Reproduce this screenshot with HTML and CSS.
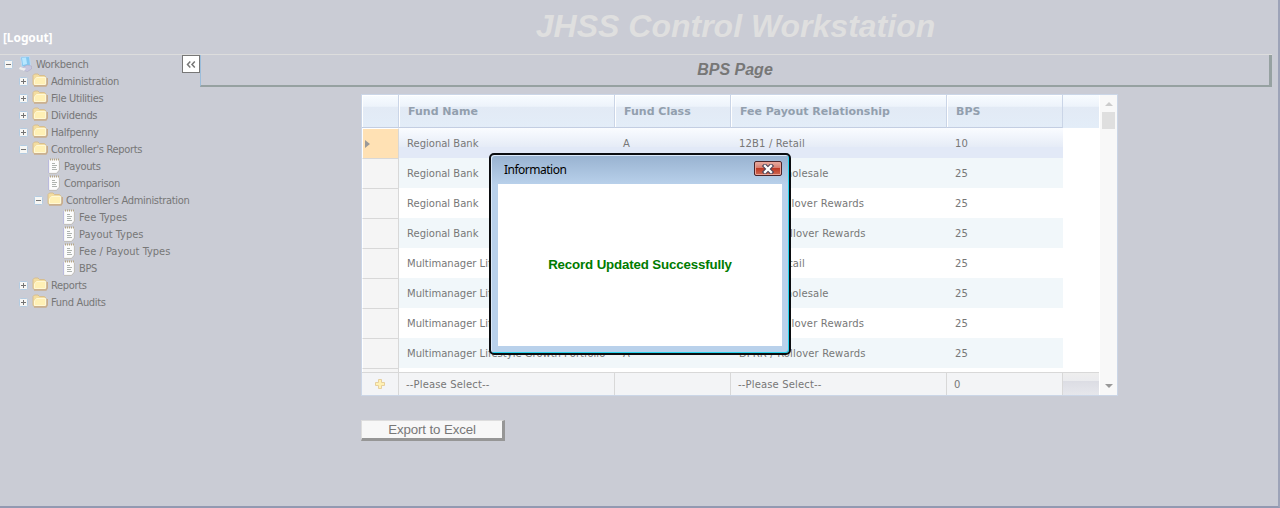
FILE: index.html
```html
<!DOCTYPE html>
<html lang="en"><head><meta charset="utf-8"><title>JHSS Control Workstation</title><link rel="stylesheet" href="styles.css"></head>
<body>
<svg width="0" height="0" class="defs">
<symbol id="folder" viewBox="0 0 16 14"><path d="M1 11.500V2.500L2.500 1H6L7.500 2.500H12.500L14 4.500V11L13 12.500H2.500Z" fill="#f3dda0" stroke="#d6bd90"/><path d="M2.500 11.500V7L4.500 4.500H13.500V11.500Z" fill="#fff0b5" stroke="#fff8d5"/><path d="M2 13H14L15.300 11V5" fill="none" stroke="#c9ad8c" stroke-width="1.400"/></symbol>
<symbol id="note" viewBox="0 0 12 16"><path d="M1.500 2H10.500V12.500L8.500 14.500H1.500Z" fill="#fcfcfc" stroke="#f4f4f4"/><path d="M.5 2V15" stroke="#babade"/><path d="M1 15.500H8.500L11.500 12V3" fill="none" stroke="#c2bfbb"/><path d="M2 1.500H11" stroke="#b6a685" stroke-width="2" stroke-dasharray="1 1"/><path d="M4 5.500H7M4 7.500H9M4 9.500H8M4 11.500H9" stroke="#aeb3af"/></symbol>
<symbol id="computer" viewBox="0 0 13 16"><path d="M1.500 1L10.500 .5L11.500 9.500L3 11Z" fill="#83c7f0" stroke="#c2d7ee"/><path d="M3 2L7 1.500L8 8L4 9Z" fill="#b8e7ff"/><path d="M8 9L12.500 10V13L8.500 15.500L3 14V12Z" fill="#c6c6df" stroke="#adadc8" stroke-width=".6"/><path d="M1 11L7 12.500L5 15L0 13Z" fill="#eee"/></symbol>
<symbol id="plus" viewBox="0 0 9 9"><rect x=".5" y=".5" width="8" height="8" rx="1" fill="#f6f6f4" stroke="#b3cbe1"/><path d="M2 4.500H7M4.500 2V7" stroke="#747474"/></symbol>
<symbol id="minus" viewBox="0 0 9 9"><rect x=".5" y=".5" width="8" height="8" rx="1" fill="#f6f6f4" stroke="#b3cbe1"/><path d="M2 4.500H7" stroke="#747474"/></symbol>
</svg>
<div class="page">
<header class="top"><a class="logout">[Logout]</a><h1>JHSS Control Workstation</h1></header>
<div class="main">
<nav class="side"><ul class="tree">
<li class="l0"><svg class="exp"><use href="#minus"/></svg><svg class="pc"><use href="#computer"/></svg><span>Workbench</span></li>
<li class="l1"><svg class="exp"><use href="#plus"/></svg><svg class="folder"><use href="#folder"/></svg><span>Administration</span></li>
<li class="l1"><svg class="exp"><use href="#plus"/></svg><svg class="folder"><use href="#folder"/></svg><span>File Utilities</span></li>
<li class="l1"><svg class="exp"><use href="#plus"/></svg><svg class="folder"><use href="#folder"/></svg><span>Dividends</span></li>
<li class="l1"><svg class="exp"><use href="#plus"/></svg><svg class="folder"><use href="#folder"/></svg><span>Halfpenny</span></li>
<li class="l1"><svg class="exp"><use href="#minus"/></svg><svg class="folder"><use href="#folder"/></svg><span>Controller's Reports</span></li>
<li class="l2 leaf"><svg class="note"><use href="#note"/></svg><span>Payouts</span></li>
<li class="l2 leaf"><svg class="note"><use href="#note"/></svg><span>Comparison</span></li>
<li class="l2"><svg class="exp"><use href="#minus"/></svg><svg class="folder"><use href="#folder"/></svg><span>Controller's Administration</span></li>
<li class="l3 leaf"><svg class="note"><use href="#note"/></svg><span class="wide">Fee Types</span></li>
<li class="l3 leaf"><svg class="note"><use href="#note"/></svg><span class="wide">Payout Types</span></li>
<li class="l3 leaf"><svg class="note"><use href="#note"/></svg><span class="wide">Fee / Payout Types</span></li>
<li class="l3 leaf"><svg class="note"><use href="#note"/></svg><span>BPS</span></li>
<li class="l1"><svg class="exp"><use href="#plus"/></svg><svg class="folder"><use href="#folder"/></svg><span>Reports</span></li>
<li class="l1"><svg class="exp"><use href="#plus"/></svg><svg class="folder"><use href="#folder"/></svg><span>Fund Audits</span></li>
</ul><button class="collapse"><svg width="10" height="7" viewBox="0 0 10 7"><path d="M4.300 .5L1.500 3.500L4.300 6.500M8.800 .5L6 3.500L8.800 6.500" fill="none" stroke="#777" stroke-width="1.500"/></svg></button></nav>
<section class="content">
<h2>BPS Page</h2>
<div class="gridbox"><div class="gridmain">
<div class="row head"><div></div><div>Fund Name</div><div>Fund Class</div><div>Fee Payout Relationship</div><div>BPS</div></div>
<div class="body">
<div class="row sel"><div class="rh"><i class="tri"></i></div><div>Regional Bank</div><div>A</div><div class="fee">12B1 / Retail</div><div class="num">10</div></div>
<div class="row alt"><div class="rh"></div><div>Regional Bank</div><div>A</div><div class="fee">12B1 / Wholesale</div><div class="num">25</div></div>
<div class="row"><div class="rh"></div><div>Regional Bank</div><div>A</div><div class="fee">12B1 / Rollover Rewards</div><div class="num">25</div></div>
<div class="row alt"><div class="rh"></div><div>Regional Bank</div><div>A</div><div class="fee">DFRR / Rollover Rewards</div><div class="num">25</div></div>
<div class="row"><div class="rh"></div><div>Multimanager Lifestyle Growth Portfolio</div><div>A</div><div class="fee">12B1 / Retail</div><div class="num">25</div></div>
<div class="row alt"><div class="rh"></div><div>Multimanager Lifestyle Growth Portfolio</div><div>A</div><div class="fee">12B1 / Wholesale</div><div class="num">25</div></div>
<div class="row"><div class="rh"></div><div>Multimanager Lifestyle Growth Portfolio</div><div>A</div><div class="fee">12B1 / Rollover Rewards</div><div class="num">25</div></div>
<div class="row alt"><div class="rh"></div><div>Multimanager Lifestyle Growth Portfolio</div><div>A</div><div class="fee">DFRR / Rollover Rewards</div><div class="num">25</div></div>
<div class="row"><div class="rh"></div><div></div><div></div><div></div><div></div></div>
</div>
<div class="row foot"><div><svg width="12" height="12"><path d="M4.500 1.500H7.500V4.500H10.500V7.500H7.500V10.500H4.500V7.500H1.500V4.500H4.500Z" fill="#fff1b4" stroke="#e6cf9c"/></svg></div><div class="fee">--Please Select--</div><div></div><div class="fee">--Please Select--</div><div>0</div></div>
</div><div class="scroll"><i class="up"></i><i class="thumb"></i><i class="down"></i></div></div>
<button class="export">Export to Excel</button>
</section></div></div>
<div class="modal" role="dialog"><div class="title"><span>Information</span><button class="close"><svg width="14" height="10" viewBox="0 0 14 10"><path d="M4 2L10 8M10 2L4 8" stroke="#50465a" stroke-width="4.500" stroke-linecap="square"/><path d="M4 2L10 8M10 2L4 8" stroke="#fff" stroke-width="2.300" stroke-linecap="square"/></svg></button></div><div class="message">Record Updated Successfully</div></div>
</body></html>
```
FILE: styles.css
```css
*{box-sizing:border-box}
body{margin:0;width:1280px;height:508px;overflow:hidden;background:#caccd5;font-family:"Liberation Sans",Arial,sans-serif;color:#777}
.defs{position:absolute}
button{padding:0;margin:0;font-family:inherit}
.page{height:508px;border-right:2px solid #9da3b8;border-bottom:2px solid #9299b1}
.top{height:55px;width:1272px;border-bottom:1px solid #ddd;display:flex;align-items:flex-start}
.logout{width:200px;padding:30px 0 0 3px;font:bold 12px/16px "Noto Sans",sans-serif;letter-spacing:-.1px;color:#fff}
h1{margin:0;padding-top:7px;width:1071px;text-align:center;font:italic bold 32px/38px "Liberation Sans",sans-serif;color:#dfdfdf}
.main{display:flex}
.side{width:200px;display:flex;justify-content:space-between;align-items:flex-start}
.tree{list-style:none;margin:0;padding:1px 0 0 4px;width:182px;font:11px/17px "DejaVu Sans Condensed",sans-serif;letter-spacing:-.32px}
.tree li{height:17px;display:flex;align-items:center;white-space:nowrap}
.tree svg{flex:none;margin-top:-1px}
.tree .wide{letter-spacing:0}
.exp{width:9px;height:9px}
.folder{width:16px;height:14px;margin:0 3px 0 4px}
.tree .folder{margin-top:-3px}
.pc{width:13px;height:16px;margin:0 4px 0 6px}
.note{width:12px;height:16px;margin-right:4px}
.l1{padding-left:15px}.l2{padding-left:30px}.l2.leaf{padding-left:44px}.l3.leaf{padding-left:59px}
.collapse{flex:none;width:18px;height:18px;border:1px solid #777;background:#fff;display:flex;align-items:center;justify-content:center}
.content{width:1072px}
h2{margin:0;height:32px;border-left:1px solid #9bbddb;border-right:3px solid #96a1a1;border-bottom:2px solid #96a1a1;text-align:center;font:italic bold 16px/29px "Liberation Sans",sans-serif;color:#777}
.gridbox{margin:7px 0 0 161px;width:757px;height:302px;border:1px solid #cbd6e7;background:#fff;display:flex}
.gridmain{width:737px}
.row{display:grid;grid-template-columns:37px 216px 116px 216px 116px;height:30px;font:10px/32px "DejaVu Sans",sans-serif}
.row>div{padding-left:8px;white-space:nowrap;overflow:hidden}
.row .fee{letter-spacing:.15px}
.row .num{letter-spacing:.2px}
.row.head{height:33px;background:linear-gradient(#f8fcff,#edf3fb 34%,#e2eaf5 38%,#e3edf8);font:bold 11px/34px "DejaVu Sans",sans-serif;color:#929fae}
.head>div{border-right:1px solid #cad5e7;border-bottom:1px solid #c3cee2;box-shadow:inset 1px 1px #fff;padding-left:9px}
.body{height:244px;overflow:hidden}
.row .rh{background:#f5f5f5;border-right:1px solid #d8d8d8;border-top:1px solid #d8d8d8;border-left:1px solid #fff}
.sel{background:linear-gradient(90deg,transparent 701px,#fff 701px),linear-gradient(#fafcff,#e6ecf7 62%,#e2e9f7 65%,#e2e9f7)}
.alt{background:linear-gradient(90deg,#f1f7fa 701px,#fff 701px)}
.row.sel .rh{background:#ffe1b4;border-top-color:#fff;padding-left:2px;display:flex;align-items:center}
.tri{border-left:5px solid #999;border-top:4px solid transparent;border-bottom:4px solid transparent}
.row.foot{height:23px;line-height:24px;border-top:1px solid #d8d8d8;background:linear-gradient(#eee,#eaebee 36%,#dcdde4 37%,#e6e7ec)}
.foot>div{background:#f3f4f6;border-right:1px solid #d8d8d8;padding-left:7px}
.foot>div:first-child{display:flex;justify-content:center;align-items:center;padding:0}
.scroll{margin-left:1px;width:17px;background:#f8f8f8;display:flex;flex-direction:column;align-items:center}
.up{margin-top:7px;border-left:4px solid transparent;border-right:4px solid transparent;border-bottom:4px solid #ccc}
.thumb{margin-top:6px;width:13px;height:17px;background:#dfdfdf}
.down{margin-top:auto;margin-bottom:7px;border-left:4px solid transparent;border-right:4px solid transparent;border-top:4px solid #999}
.export{display:block;margin:24px 0 0 161px;width:144px;height:21px;border:1px solid #ddd;border-right:3px solid #969696;border-bottom:3px solid #969696;background:#f7f7f7;color:#777;font-size:13.3px;letter-spacing:-.12px;line-height:17px}
.modal{position:absolute;left:489px;top:153px;width:302px;height:202px;border:2px solid #0b0d10;border-radius:5px;background:linear-gradient(#98b2d0,#b9d1eb 30px);box-shadow:inset -1px -1px #25d4ee,inset 1px 1px #dceafa;padding:0 7px 7px;display:flex;flex-direction:column}
.title{height:29px;display:flex;justify-content:space-between;padding:6px 0 0 6px;color:#000;font:12px/17px "Noto Sans",sans-serif;letter-spacing:-.5px}
.close{width:28px;height:15px;border:1px solid #49242a;border-radius:2px;background:linear-gradient(#e5afa5,#d8796b 48%,#bd3925 50%,#ce6b55);display:flex;justify-content:center;align-items:center;box-shadow:inset 0 0 0 1px #e9a397}
.message{height:162px;padding-bottom:1px;background:#fff;display:flex;align-items:center;justify-content:center;color:#007b00;font-weight:bold;font-size:13.3px;letter-spacing:-.15px}
```
